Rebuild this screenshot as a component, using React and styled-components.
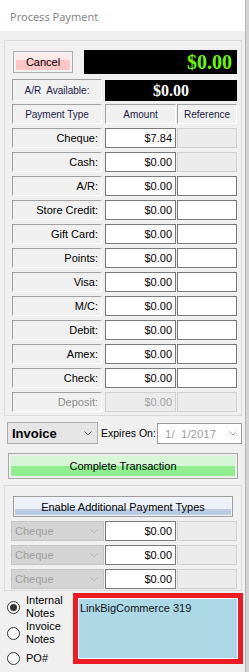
import React from 'react';
import styled, { createGlobalStyle } from 'styled-components';

const GlobalStyle = createGlobalStyle`
  html, body { margin: 0; padding: 0; background: #d3d3d3; }
  body { font-family: "Liberation Sans", Arial, sans-serif; font-size: 11px; color: #000; }
  * { box-sizing: border-box; }
`;

const Window = styled.div`
  width: 246px;
  height: 672px;
  background: #f0f0f0;
  border-right: 1px solid #b4b4b4;
  display: flex;
  flex-direction: column;
  overflow: hidden;
`;

const TitleBar = styled.div`
  height: 31px;
  flex-shrink: 0;
  background: #fff;
  display: flex;
  align-items: center;
  padding: 1px 0 0 10px;
  font-family: "Noto Sans", "Liberation Sans", sans-serif;
  font-size: 11px;
  color: #888;
`;

const Body = styled.div`
  display: flex;
  flex-direction: column;
  padding: 9px 0 0 4px;
`;

const GroupBox = styled.div`
  width: 238px;
  border: 1px solid #d9d9d9;
  padding: ${p => p.$pad};
  margin-top: ${p => p.$top || 0}px;
  display: flex;
  flex-direction: column;
`;

const TopRow = styled.div`
  display: flex;
  align-items: center;
  height: 24px;
`;

const CancelButton = styled.div`
  width: 60px;
  height: 22px;
  margin-left: 1px;
  border: 1px solid #adadad;
  box-shadow: inset 0 0 0 2px #f2f2f2;
  background: linear-gradient(to bottom, #ffe8e8 0, #ffe8e8 42%, #ffc6c6 42%, #ffc6c6 100%);
  display: flex;
  align-items: center;
  justify-content: center;
  font-size: 11px;
`;

const TotalDisplay = styled.div`
  width: 153px;
  height: 24px;
  margin-left: 11px;
  background: #000;
  color: #6cf700;
  font-family: "Liberation Serif", "Times New Roman", serif;
  font-weight: bold;
  font-size: 20px;
  line-height: 25px;
  text-align: right;
  padding-right: 5px;
`;

const ARRow = styled.div`
  display: flex;
  align-items: center;
  gap: 3px;
  height: 22px;
  margin: 5px 0 3px;
`;

const ARValue = styled.div`
  width: 132px;
  height: 21px;
  background: #000;
  color: #fff;
  font-family: "Liberation Serif", "Times New Roman", serif;
  font-weight: bold;
  font-size: 16px;
  line-height: 21px;
  text-align: center;
`;

const Table = styled.div`
  display: flex;
  flex-direction: column;
  gap: 4px;
`;

const Row = styled.div`
  display: flex;
  height: 20px;
  gap: ${p => p.$gap}px;
`;

const Fields = styled.div`
  display: flex;
  gap: 1px;
`;

const Cell = styled.div`
  width: ${p => p.$w}px;
  height: ${p => p.$h || 20}px;
  border: 1px solid;
  border-color: #a0a0a0 #fff #fff #a0a0a0;
  display: flex;
  align-items: center;
  justify-content: ${p => (p.$center ? 'center' : 'flex-end')};
  padding-right: ${p => (p.$center ? 0 : 3)}px;
  font-size: ${p => (p.$small ? 10 : 11)}px;
  color: ${p => (p.$small ? '#1b1b4b' : p.$disabled ? '#8d8d8d' : '#000')};
  white-space: pre;
`;

const Field = styled.div`
  width: ${p => p.$w}px;
  height: 20px;
  border: 1px solid ${p => (p.$disabled ? '#d0d0d0' : '#7a7a7a')};
  background: ${p => (p.$disabled ? '#ebebeb' : '#fff')};
  color: ${p => (p.$disabled ? '#a0a0a0' : '#000')};
  display: flex;
  align-items: center;
  justify-content: flex-end;
  padding-right: 3px;
  font-size: 11px;
`;

const Combo = styled.div`
  width: ${p => p.$w}px;
  height: ${p => p.$h}px;
  border: 1px solid ${p => (p.$disabled ? '#c4c4c4' : '#adadad')};
  background: ${p => (p.$disabled ? '#d4d4d4' : '#e5e5e5')};
  color: ${p => (p.$disabled ? '#9c9c9c' : '#000')};
  font-weight: ${p => (p.$bold ? 'bold' : 'normal')};
  font-size: ${p => (p.$bold ? 13 : 11)}px;
  display: flex;
  align-items: center;
  justify-content: space-between;
  padding: 0 5px 0 ${p => (p.$bold ? 4 : 3)}px;
`;

const InvoiceRow = styled.div`
  display: flex;
  align-items: flex-start;
  height: 22px;
  margin-top: 6px;
  padding-left: 3px;
`;

const ExpiresLabel = styled.div`
  height: 22px;
  margin-left: 3px;
  width: 56px;
  display: flex;
  align-items: center;
  font-size: 10.5px;
  white-space: nowrap;
`;

const DateBox = styled.div`
  width: 85px;
  height: 21px;
  margin-top: 1px;
  border: 1px solid #9a9a9a;
  background: #fff;
  color: #a0a0a0;
  display: flex;
  align-items: center;
  justify-content: space-between;
  padding: 0 4px 0 7px;
  font-size: 11.5px;
  white-space: pre;
`;

const CompleteButton = styled.div`
  width: 230px;
  height: 26px;
  margin: 9px 0 0 4px;
  border: 1px solid #a9a9a9;
  box-shadow: inset 0 0 0 2px #eeeeee;
  background: linear-gradient(to bottom, #d5f7d5 0, #d5f7d5 50%, #90ee90 50%, #90ee90 100%);
  display: flex;
  align-items: center;
  justify-content: center;
  font-size: 11px;
`;

const EnableButton = styled.div`
  width: 220px;
  height: 21px;
  margin: 0 0 4px 2px;
  border: 1px solid #9d9d9d;
  box-shadow: inset 0 0 0 1px #f4f4f4;
  background: linear-gradient(to bottom, #edf1f8 0, #edf1f8 62%, #b9cce4 62%, #b9cce4 100%);
  display: flex;
  align-items: center;
  justify-content: center;
  font-size: 11px;
`;

const Bottom = styled.div`
  display: flex;
  margin-top: 2px;
  padding-left: 3px;
`;

const RadioColumn = styled.div`
  width: 66px;
  display: flex;
  flex-direction: column;
  padding-top: 1px;
`;

const RadioItem = styled.div`
  display: flex;
  align-items: center;
  gap: 6px;
  height: ${p => p.$h}px;
  margin-top: ${p => p.$top || 0}px;
`;

const RadioCircle = styled.span`
  width: 13px;
  height: 13px;
  flex-shrink: 0;
  border-radius: 50%;
  border: 1px solid #333;
  background: #fff;
  display: flex;
  align-items: center;
  justify-content: center;
`;

const RadioDot = styled.span`
  width: 7px;
  height: 7px;
  border-radius: 50%;
  background: #333;
`;

const RadioLabel = styled.span`
  font-size: 11px;
  line-height: 13px;
`;

const NotesBox = styled.div`
  width: 170px;
  height: 71px;
  border: 5px solid #ed1c24;
  box-shadow: inset 0 0 0 1px #fff;
  background: #add8e6;
  padding: 3px 2px;
  font-size: 11px;
  line-height: 14px;
  color: #111;
`;

const Chevron = ({ color = '#606060' }) => (
  <svg width="8" height="5" viewBox="0 0 8 5">
    <path d="M0.5 0.5 L4 4 L7.5 0.5" fill="none" stroke={color} strokeWidth="1" />
  </svg>
);

const payments = [
  { name: 'Cheque:', amount: '$7.84', refOff: true },
  { name: 'Cash:', amount: '$0.00', refOff: true },
  { name: 'A/R:', amount: '$0.00' },
  { name: 'Store Credit:', amount: '$0.00' },
  { name: 'Gift Card:', amount: '$0.00' },
  { name: 'Points:', amount: '$0.00' },
  { name: 'Visa:', amount: '$0.00' },
  { name: 'M/C:', amount: '$0.00' },
  { name: 'Debit:', amount: '$0.00' },
  { name: 'Amex:', amount: '$0.00' },
  { name: 'Check:', amount: '$0.00' },
  { name: 'Deposit:', amount: '$0.00', refOff: true, off: true },
];

export default function App() {
  return (
    <>
      <GlobalStyle />
      <Window>
        <TitleBar>Process Payment</TitleBar>
        <Body>
          <GroupBox $pad="9px 4px 3px 7px">
            <TopRow>
              <CancelButton>Cancel</CancelButton>
              <TotalDisplay>$0.00</TotalDisplay>
            </TopRow>
            <ARRow>
              <Cell $w={90} $h={22} $center $small>{'A/R  Available:'}</Cell>
              <ARValue>$0.00</ARValue>
            </ARRow>
            <Table>
              <Row $gap={3}>
                <Cell $w={90} $center $small>Payment Type</Cell>
                <Fields>
                  <Cell $w={71} $center $small>Amount</Cell>
                  <Cell $w={60} $center $small>Reference</Cell>
                </Fields>
              </Row>
              {payments.map(p => (
                <Row key={p.name} $gap={3}>
                  <Cell $w={90} $disabled={p.off}>{p.name}</Cell>
                  <Fields>
                    <Field $w={71} $disabled={p.off}>{p.amount}</Field>
                    <Field $w={60} $disabled={p.refOff} />
                  </Fields>
                </Row>
              ))}
            </Table>
          </GroupBox>

          <InvoiceRow>
            <Combo $w={91} $h={22} $bold>
              Invoice
              <Chevron />
            </Combo>
            <ExpiresLabel>Expires On:</ExpiresLabel>
            <DateBox>
              {'1/  1/2017'}
              <Chevron color="#a8a8a8" />
            </DateBox>
          </InvoiceRow>

          <CompleteButton>Complete Transaction</CompleteButton>

          <GroupBox $pad="10px 4px 1px 6px" $top={6}>
            <EnableButton>Enable Additional Payment Types</EnableButton>
            <Table>
              {[0, 1, 2].map(i => (
                <Row key={i} $gap={1}>
                  <Combo $w={93} $h={20} $disabled>
                    Cheque
                    <Chevron color="#b8b8b8" />
                  </Combo>
                  <Fields>
                    <Field $w={71}>$0.00</Field>
                    <Field $w={60} $disabled />
                  </Fields>
                </Row>
              ))}
            </Table>
          </GroupBox>

          <Bottom>
            <RadioColumn>
              <RadioItem $h={26}>
                <RadioCircle><RadioDot /></RadioCircle>
                <RadioLabel>Internal<br />Notes</RadioLabel>
              </RadioItem>
              <RadioItem $h={26}>
                <RadioCircle />
                <RadioLabel>Invoice<br />Notes</RadioLabel>
              </RadioItem>
              <RadioItem $h={13} $top={6}>
                <RadioCircle />
                <RadioLabel>PO#</RadioLabel>
              </RadioItem>
            </RadioColumn>
            <NotesBox>LinkBigCommerce 319</NotesBox>
          </Bottom>
        </Body>
      </Window>
    </>
  );
}
